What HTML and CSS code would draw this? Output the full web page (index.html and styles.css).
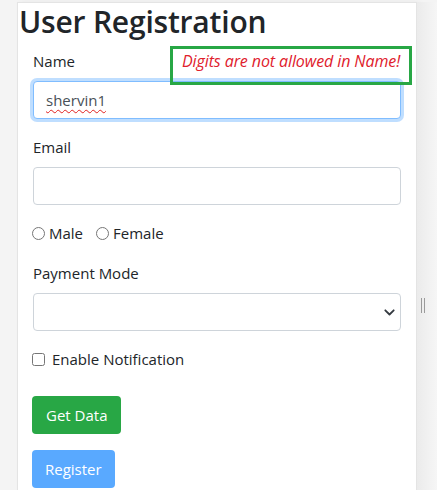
FILE: index.html
```html
<!DOCTYPE html>
<html lang="en">
<head>
<meta charset="utf-8">
<title>User Registration</title>
<link rel="stylesheet" href="styles.css">
</head>
<body>
<div class="page">
  <main class="card">
    <h1 class="title">User Registration</h1>
    <form class="form">
      <div class="group group-name">
        <label class="label" for="name">Name</label>
        <div class="control control-focus" id="name" role="textbox" contenteditable="true"><span class="misspelled">shervin1</span></div>
        <div class="error-box"><span class="error-text">Digits are not allowed in Name!</span></div>
      </div>
      <div class="group">
        <label class="label" for="email">Email</label>
        <input class="control" id="email" type="email">
      </div>
      <div class="group radios">
        <label class="radio"><input type="radio" name="gender"> Male</label>
        <label class="radio"><input type="radio" name="gender"> Female</label>
      </div>
      <div class="group">
        <label class="label" for="pay">Payment Mode</label>
        <div class="select-wrap">
          <select class="control select" id="pay"><option></option></select>
          <svg class="chevron" width="11" height="7" viewBox="0 0 11 7"><path d="M1.3 1.3 L5.5 5.5 L9.7 1.3" fill="none" stroke="#343a40" stroke-width="1.8" stroke-linecap="round" stroke-linejoin="round"/></svg>
        </div>
      </div>
      <div class="group check-group">
        <label class="check"><input type="checkbox"> Enable Notification</label>
      </div>
      <div class="actions">
        <button type="button" class="btn btn-success">Get Data</button>
        <button type="button" class="btn btn-primary" disabled>Register</button>
      </div>
    </form>
  </main>
  <aside class="gutter"><span class="handle"></span></aside>
</div>
</body>
</html>
```
FILE: styles.css
```css
html, body {
  margin: 0;
  padding: 0;
  height: 100%;
  overflow: hidden;
}
body {
  background: #f4f4f4;
  font-family: "Open Sans", "Noto Sans", sans-serif;
  color: #212529;
  font-size: 15px;
  line-height: 24px;
}
.page {
  display: flex;
  padding-top: 2px;
  padding-left: 17px;
  height: 100%;
  box-sizing: border-box;
}
.card {
  width: 400px;
  box-sizing: border-box;
  background: #fff;
  border: 1px solid #e4e4e4;
  border-bottom: none;
  box-shadow: 3px 0 6px rgba(0,0,0,0.05);
  flex-shrink: 0;
}
.title {
  margin: 0 0 8px 0;
  padding-left: 1px;
  font-size: 30px;
  font-weight: 600;
  line-height: 38px;
  color: #212529;
  letter-spacing: -0.2px;
}
.form {
  padding: 0 15px;
}
.group {
  margin-bottom: 16px;
  position: relative;
}
.label {
  display: block;
  margin-bottom: 8px;
}
.control {
  display: block;
  width: 100%;
  height: 38px;
  box-sizing: border-box;
  padding: 6px 12px;
  font-family: inherit;
  font-size: 15px;
  line-height: 24px;
  color: #495057;
  background: #fff;
  border: 1px solid #ced4da;
  border-radius: 4px;
  outline: none;
}
.control-focus {
  border-color: #80bdff;
  box-shadow: 0 0 0 3px rgba(0,123,255,0.25);
  white-space: nowrap;
  overflow: hidden;
}
.misspelled {
  text-decoration: underline wavy #e02020;
  text-decoration-thickness: 1px;
  text-underline-offset: 3px;
}
.error-box {
  position: absolute;
  left: 137px;
  top: -3px;
  width: 242px;
  height: 39px;
  box-sizing: border-box;
  border: 3px solid #28a745;
  padding: 0 0 0 9px;
}
.error-text {
  font-style: italic;
  color: #e0202c;
  font-size: 16px;
  line-height: 24px;
  letter-spacing: -0.1px;
}
.radios {
  display: flex;
  gap: 14px;
  height: 24px;
  align-items: center;
}
.radio, .check {
  display: flex;
  align-items: center;
  gap: 4px;
}
.radio input, .check input {
  margin: 0 0 0 -1px;
  width: 13px;
  height: 13px;
}
.check { gap: 7px; }
.select-wrap {
  position: relative;
}
.select {
  appearance: none;
  -webkit-appearance: none;
}
.chevron {
  position: absolute;
  right: 6px;
  top: 16px;
}
.check-group {
  margin-bottom: 25px;
}
.actions {
  display: flex;
  flex-direction: column;
  align-items: flex-start;
  gap: 16px;
  margin-left: -1px;
}
.btn {
  height: 38px;
  padding: 0 13px;
  font-family: inherit;
  font-size: 15px;
  color: #fff;
  border: none;
  border-radius: 4px;
}
.btn-success { background: #28a745; padding: 0 14px; }
.btn-primary { background: #59a9ff; }
.gutter {
  flex: 1;
  background: linear-gradient(to right, #ebebeb, #f6f6f6);
  position: relative;
  padding-top: 296px;
  padding-left: 4px;
}
.handle {
  display: block;
  width: 2px;
  height: 15px;
  border-left: 1px solid #9a9a9a;
  border-right: 1px solid #9a9a9a;
}
```
